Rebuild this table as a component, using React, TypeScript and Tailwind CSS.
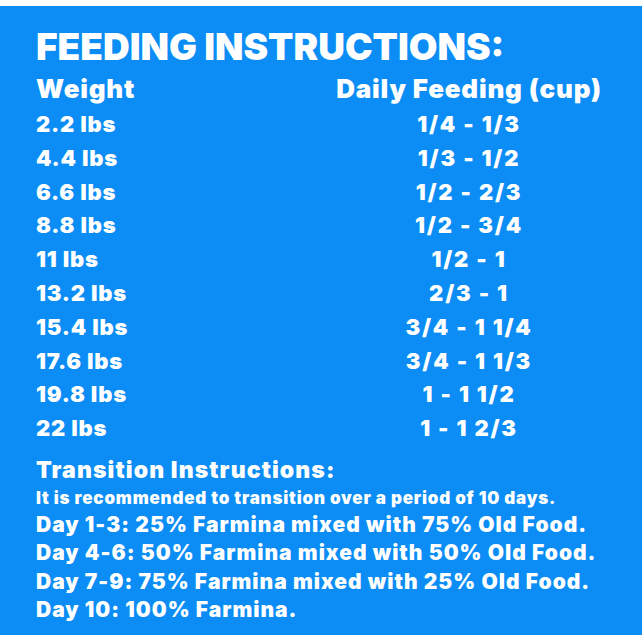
const rows: [string, string][] = [
  ["2.2 lbs", "1/4 - 1/3"],
  ["4.4 lbs", "1/3 - 1/2"],
  ["6.6 lbs", "1/2 - 2/3"],
  ["8.8 lbs", "1/2 - 3/4"],
  ["11 lbs", "1/2 - 1"],
  ["13.2 lbs", "2/3 - 1"],
  ["15.4 lbs", "3/4 - 1 1/4"],
  ["17.6 lbs", "3/4 - 1 1/3"],
  ["19.8 lbs", "1 - 1 1/2"],
  ["22 lbs", "1 - 1 2/3"],
];

const days = [
  "Day 1-3: 25% Farmina mixed with 75% Old Food.",
  "Day 4-6: 50% Farmina mixed with 50% Old Food.",
  "Day 7-9: 75% Farmina mixed with 25% Old Food.",
  "Day 10: 100% Farmina.",
];

export default function App() {
  return (
    <div className="h-[642px] w-[642px] bg-white pt-[6px] font-['Inter','Liberation_Sans',sans-serif]">
      <div className="h-[629px] bg-[#0b8df5] pl-[36px] pt-[18px] font-black text-white">
        <h1 className="whitespace-nowrap text-[37px] leading-[46px]">FEEDING INSTRUCTIONS:</h1>

        <div className="grid grid-cols-[296px_274px] whitespace-nowrap">
          <div className="text-[26px] leading-[38px] tracking-[0.8px]">Weight</div>
          <div className="text-center text-[26px] leading-[38px] tracking-[0.8px]">Daily Feeding (cup)</div>
          {rows.map(([w, c]) => (
            <div key={w} className="contents text-[22px] leading-[33.8px]">
              <div className="tracking-[0.8px]">{w}</div>
              <div className="text-center tracking-[1.8px]">{c}</div>
            </div>
          ))}
        </div>

        <div className="mt-[9px] whitespace-nowrap">
          <h2 className="text-[23px] leading-[30px] tracking-[1.1px]">Transition Instructions:</h2>
          <p className="text-[17px] leading-[26px] tracking-[0.8px]">It is recommended to transition over a period of 10 days.</p>
          {days.map((d) => (
            <p key={d} className="text-[21px] leading-[28.5px] tracking-[1px]">{d}</p>
          ))}
        </div>
      </div>
    </div>
  );
}
